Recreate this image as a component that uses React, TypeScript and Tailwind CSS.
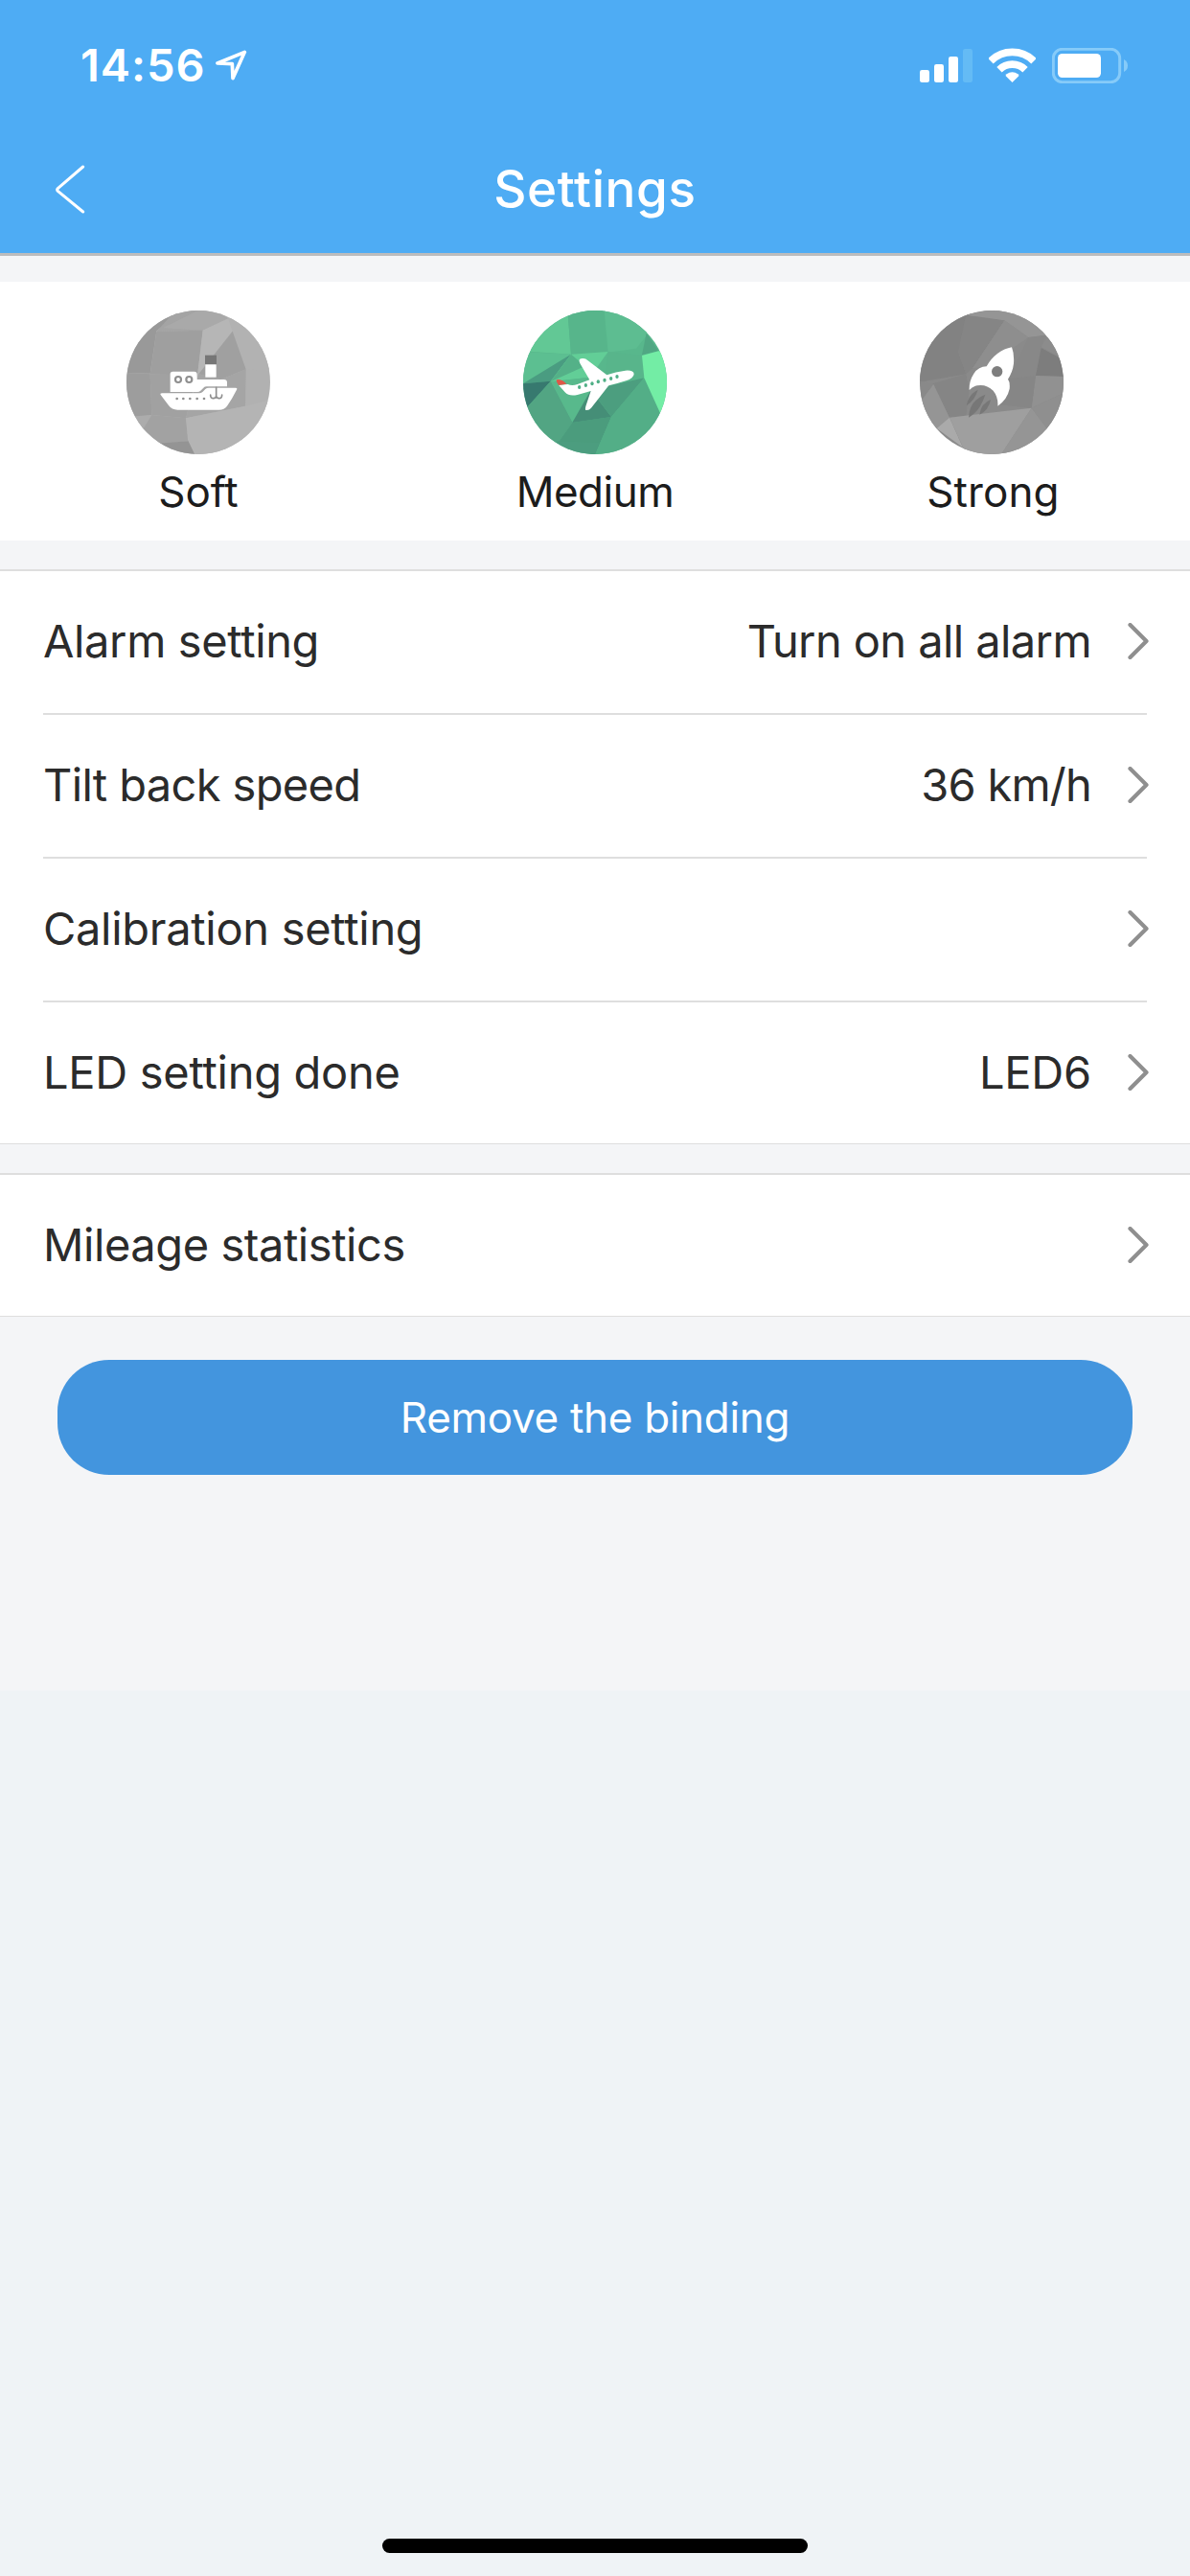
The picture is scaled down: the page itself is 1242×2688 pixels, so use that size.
import { useState, type ReactNode } from 'react';
import clsx from 'clsx';

type Mode = { id: string; label: string; tracking: string; icon: ReactNode };
type Item = { label: string; value?: string; tracking: string; valueTracking?: string };

const rideItems: Item[] = [
    { label: 'Alarm setting', value: 'Turn on all alarm', tracking: 'tracking-[-0.37px]', valueTracking: 'tracking-[-0.59px]' },
    { label: 'Tilt back speed', value: '36 km/h', tracking: 'tracking-[-0.64px]', valueTracking: 'tracking-[-0.77px]' },
    { label: 'Calibration setting', tracking: 'tracking-[-0.3px]' },
    { label: 'LED setting done', value: 'LED6', tracking: 'tracking-[-0.28px]', valueTracking: 'tracking-[-0.2px]' },
];

const statItems: Item[] = [
    { label: 'Mileage statistics', tracking: 'tracking-[-0.44px]' },
];

function StatusBar() {
    return (
        <div className="flex h-[136px] items-center justify-between pl-[84px] pr-[65px] text-white">
            <div className="flex items-center gap-[10px]">
                <span className="text-[47px] leading-[56px] font-semibold tracking-[0.94px]">14:56</span>
                <svg className="h-[32px] w-[33px]" viewBox="674 155 99 96" fill="none">
                    <path d="M765 162 L680 197 L726 199 L728 244 Z" stroke="currentColor" strokeWidth="11" strokeLinejoin="round" />
                </svg>
            </div>
            <div className="flex items-center gap-[17px]">
                <svg className="h-[37px] w-[55px]" viewBox="180 147 165 111" fill="currentColor">
                    <rect x="180" y="216" width="30" height="39" rx="7" />
                    <rect x="225" y="198" width="30" height="57" rx="7" />
                    <rect x="270" y="174" width="30" height="81" rx="7" />
                    <rect x="315" y="150" width="30" height="105" rx="7" fill="#64bbf5" />
                </svg>
                <svg className="h-[37px] w-[49px]" viewBox="396 147 147 111" fill="none" stroke="currentColor" strokeWidth="23">
                    <path d="M402 188 A95.5 95.5 0 0 1 537 188" />
                    <path d="M429 215 A57.5 57.5 0 0 1 510 215" />
                    <path d="M469.500 255 L449 235 Q448 232 452 229 Q460 223 469.500 223 Q479 223 487 229 Q491 232 490 235 Z" fill="currentColor" stroke="none" />
                </svg>
                <svg className="h-[37px] w-[79px]" viewBox="594 147 237 111">
                    <rect x="598" y="151" width="208" height="103" rx="28" fill="none" stroke="#86cbf9" strokeWidth="9" />
                    <rect x="612" y="165" width="135" height="75" rx="14" fill="currentColor" />
                    <path d="M819 183 Q831 189 831 202.500 Q831 216 819 222 Z" fill="#86cbf9" />
                </svg>
            </div>
        </div>
    );
}

function BoatIcon() {
    return (
        <svg className="size-[150px] rounded-full" viewBox="36 41 450 450">
            <rect x="36" y="41" width="450" height="450" fill="#b1b1b1" />
            <path d="M0 0H260L130 105L110 238L36 236Z" fill="#999" />
            <path d="M130 107L190 41H265L275 103Z" fill="#a4a4a4" />
            <path d="M150 96L260 41H320L355 66L275 103Z" fill="#a9a9a9" />
            <path d="M130 107L275 103L258 245L110 240Z" fill="#9f9f9f" />
            <path d="M275 103L355 66L368 106L268 235L258 245Z" fill="#b6b6b6" />
            <path d="M355 66L400 41H490V230L408 225Z" fill="#b2b2b2" />
            <path d="M368 106L410 225L330 258L262 240Z" fill="#a0a0a0" />
            <path d="M410 225L408 340L222 378L262 240L330 258Z" fill="#a5a5a5" />
            <path d="M36 236L110 240L115 368L36 378Z" fill="#9d9d9d" />
            <path d="M110 240H258L222 378L115 368Z" fill="#a1a1a1" />
            <path d="M36 374L115 368L88 412L60 430Z" fill="#acacac" />
            <path d="M115 368L222 378L230 450L140 458L88 412Z" fill="#a2a2a2" />
            <path d="M120 458L230 450L250 491H120Z" fill="#949494" />
            <path d="M222 378L408 340L490 320V491H250L228 445Z" fill="#b4b4b4" />
            <rect x="282" y="181" width="36" height="29" fill="#767676" />
            <rect x="283" y="210" width="34" height="40" fill="#fff" />
            <path d="M173 240Q173 232 181 232H248Q257 232 257 241V257H341Q351 257 351 266V279H287Q281 279 277 283L268 292Q264 296 258 296H173Z" fill="#fff" />
            <path d="M147 300H264Q270 300 275 295L283 287Q287 283 294 283H378Q384 283 381 289Q367 317 351 340Q342 352 326 352H196Q178 352 168 338L143 305Q140 300 147 300Z" fill="#fff" />
            <g fill="none" stroke="#8f8f8f" strokeWidth="6.500">
                <circle cx="198" cy="257" r="9" />
                <circle cx="232" cy="257" r="9" />
                <path d="M317 282V314M299 305Q299 317 309 316Q317 315 317 308Q317 315 325 316Q335 317 335 305" strokeWidth="5" strokeLinecap="round" />
            </g>
            <g fill="#8f8f8f">
                <circle cx="194" cy="317" r="4" />
                <circle cx="214" cy="317" r="4" />
                <circle cx="235" cy="317" r="4" />
                <circle cx="257" cy="317" r="4" />
                <circle cx="279" cy="317" r="4" />
            </g>
        </svg>
    );
}

function PlaneIcon() {
    return (
        <svg className="size-[150px] rounded-full" viewBox="46 41 450 450">
            <rect x="46" y="41" width="450" height="450" fill="#58b78c" />
            <path d="M46 41H185L196 178L75 170H46Z" fill="#62c895" />
            <path d="M185 41H305L312 170L196 178Z" fill="#57b58b" />
            <path d="M300 41H450L432 120L400 160L312 172Z" fill="#5dbd91" />
            <path d="M46 170L196 178L46 270Z" fill="#5cbf91" />
            <path d="M196 178L132 262L46 270Z" fill="#4a9c81" />
            <path d="M46 270L132 262L58 345H46Z" fill="#37796f" />
            <path d="M196 178L312 170L255 250L132 264Z" fill="#62ce97" />
            <path d="M196 178L240 215L132 264Z" fill="#54b188" />
            <path d="M132 264L255 250L265 290L200 392Z" fill="#58b98c" />
            <path d="M132 264L200 392L58 345Z" fill="#50a482" />
            <path d="M58 345L132 264L200 392L155 455L46 450Z" fill="#52a583" />
            <path d="M200 392L322 374L270 495L155 455Z" fill="#4b9c7d" />
            <path d="M120 491L155 450L285 455L270 495Z" fill="#4c9d7f" />
            <path d="M258 290L322 374L200 392Z" fill="#458e77" />
            <path d="M258 290L425 252L322 374Z" fill="#4c9e7f" />
            <path d="M312 170L418 182L425 252L300 262Z" fill="#58b58b" />
            <path d="M322 374L425 252L475 360L500 491H272Z" fill="#53ae87" />
            <path d="M432 112L470 168L418 180Z" fill="#50a783" />
            <path d="M418 182L470 168L500 175V310L475 362L425 252Z" fill="#73eda5" />
            <path d="M222 201Q220 191 232 191Q241 190 249 198L308 243Q336 233 366 229Q392 227 393 240Q392 254 368 261Q340 270 314 276L259 346Q251 355 241 352Q240 347 242 341L258 293L216 305Q190 311 177 297L157 274L186 272Q199 278 216 272L254 258L225 208Q223 205 222 201Z" fill="#fff" />
            <path d="M150 261Q150 256 157 257Q170 258 182 271L157 275Q151 267 150 261Z" fill="#df5848" />
            <g fill="#50af86">
                <ellipse cx="222" cy="281" rx="5" ry="6" />
                <ellipse cx="242" cy="275" rx="5" ry="6" />
                <ellipse cx="262" cy="270" rx="5" ry="6" />
                <ellipse cx="281" cy="264" rx="5" ry="6" />
                <ellipse cx="301" cy="259" rx="5" ry="6" />
                <ellipse cx="321" cy="254" rx="5" ry="6" />
                <ellipse cx="340" cy="248" rx="5" ry="6" />
            </g>
        </svg>
    );
}

function RocketIcon() {
    return (
        <svg className="size-[150px] rounded-full" viewBox="45 41 450 450">
            <rect x="45" y="41" width="450" height="450" fill="#8a8a8a" />
            <path d="M45 41H210L165 170L190 240L45 265Z" fill="#828282" />
            <path d="M190 52L310 72L210 222L190 240L165 170Z" fill="#858585" />
            <path d="M180 54L260 41H400L440 118L385 125L310 72Z" fill="#959595" />
            <path d="M310 72L385 125L255 215L210 222Z" fill="#8e8e8e" />
            <path d="M385 125L440 118L425 155L412 245L320 260Z" fill="#888" />
            <path d="M425 155L448 118L495 150V190Z" fill="#8c8c8c" />
            <path d="M425 158L485 190L495 248L408 245Z" fill="#7d7d7d" />
            <path d="M408 245L495 248V300L395 346Z" fill="#919191" />
            <path d="M320 255L408 245L395 346L290 335Z" fill="#868686" />
            <path d="M85 270L190 240L200 290L190 370L138 376Z" fill="#858585" />
            <path d="M45 262L88 272L50 320Z" fill="#898989" />
            <path d="M88 272L138 376L98 410L45 360V330Z" fill="#959595" />
            <path d="M138 376L180 470L98 410Z" fill="#aaa" />
            <path d="M138 376L395 346L300 491H190Z" fill="#9f9f9f" />
            <path d="M395 346L450 420L400 491H300Z" fill="#959595" />
            <path d="M395 346L495 300V400L450 420Z" fill="#8f8f8f" />
            <path d="M333 156Q341 176 339 207Q336 233 321 256Q328 265 326 286Q319 319 289 340Q291 312 275 292Q253 271 225 276Q210 279 200 290Q199 262 214 239Q229 216 254 216Q267 192 288 176Q310 160 333 156Z" fill="#fff" />
            <circle cx="287" cy="232" r="17" fill="#7e7e7e" />
            <g fill="#777">
                <path d="M227 289Q198 303 191 338Q216 325 227 289Z" />
                <path d="M250 304Q201 322 198 376Q233 357 250 304Z" />
                <path d="M267 320Q236 332 232 367Q259 356 267 320Z" />
            </g>
        </svg>
    );
}

const modes: Mode[] = [
    { id: 'soft', label: 'Soft', tracking: 'tracking-[-0.13px]', icon: <BoatIcon /> },
    { id: 'medium', label: 'Medium', tracking: 'tracking-[-0.5px]', icon: <PlaneIcon /> },
    { id: 'strong', label: 'Strong', tracking: 'tracking-[0.1px] pl-[3px]', icon: <RocketIcon /> },
];

function Row({ item, first, last }: { item: Item; first: boolean; last: boolean }) {
    return (
        <li>
            <div className={clsx('h-[2px] bg-[#dedede]', !first && 'mx-[45px]')} />
            <button
                className={clsx(
                    'flex h-[148px] w-full items-center pr-[43px] pl-[45px] text-[47px] leading-[56px] text-[#2b2b2b]',
                    last ? 'border-b border-[#dedede] pb-px' : 'pb-[2px]'
                )}
            >
                <span className={item.tracking}>{item.label}</span>
                <span className={clsx('mr-[38px] ml-auto', item.valueTracking)}>{item.value}</span>
                <svg className="h-[38px] w-[22px]" viewBox="0 0 22 38" fill="none">
                    <path d="M2.500 2L19.500 19L2.500 36" stroke="#8f8f8f" strokeWidth="4.200" strokeLinecap="round" strokeLinejoin="round" />
                </svg>
            </button>
        </li>
    );
}

function Group({ items }: { items: Item[] }) {
    return (
        <ul className="bg-white">
            {items.map((item, i) => (
                <Row key={item.label} item={item} first={i === 0} last={i === items.length - 1} />
            ))}
        </ul>
    );
}

export default function App() {
    const [mode, setMode] = useState('medium');

    return (
        <div className="flex h-[2688px] w-[1242px] flex-col bg-[#eff3f6] font-['Inter','Liberation_Sans',sans-serif]">
            <header className="h-[267px] border-b-[3px] border-[#bbbcbe] bg-[#4eacf4]">
                <StatusBar />
                {/* Nav bar, the empty right cell keeps the title centered */}
                <div className="grid h-[122px] grid-cols-[1fr_auto_1fr] items-center text-white">
                    <button className="mt-[2px] ml-[57px] w-[32px]" aria-label="Back">
                        <svg className="h-[52px] w-[32px]" viewBox="171 517 96 156" fill="none">
                            <path d="M260 523L181 591Q177 595 181 599L260 664" stroke="currentColor" strokeWidth="9" strokeLinecap="round" strokeLinejoin="round" />
                        </svg>
                    </button>
                    <h1 className="text-[53px] leading-[64px] font-medium tracking-[0.61px]">Settings</h1>
                    <span />
                </div>
            </header>

            <main className="h-[1497px] bg-[#f4f5f7] pt-[27px]">
                <div className="grid h-[270px] grid-cols-3 bg-white pt-[30px]">
                    {modes.map((m) => (
                        <button
                            key={m.id}
                            aria-pressed={mode === m.id}
                            onClick={() => setMode(m.id)}
                            className="flex flex-col items-center gap-[11px] text-[44px] leading-[56px] text-[#1c1c1c]"
                        >
                            {m.icon}
                            <span className={m.tracking}>{m.label}</span>
                        </button>
                    ))}
                </div>
                <div className="mt-[30px] flex flex-col gap-[30px]">
                    <Group items={rideItems} />
                    <Group items={statItems} />
                </div>
                <button className="mx-[60px] mt-[45px] h-[120px] w-[1122px] rounded-[54px] bg-[#4395de] text-[44px] tracking-[-0.31px] text-white">
                    Remove the binding
                </button>
            </main>

            <div className="mx-auto mt-auto mb-[24px] h-[15px] w-[444px] rounded-full bg-black" />
        </div>
    );
}
